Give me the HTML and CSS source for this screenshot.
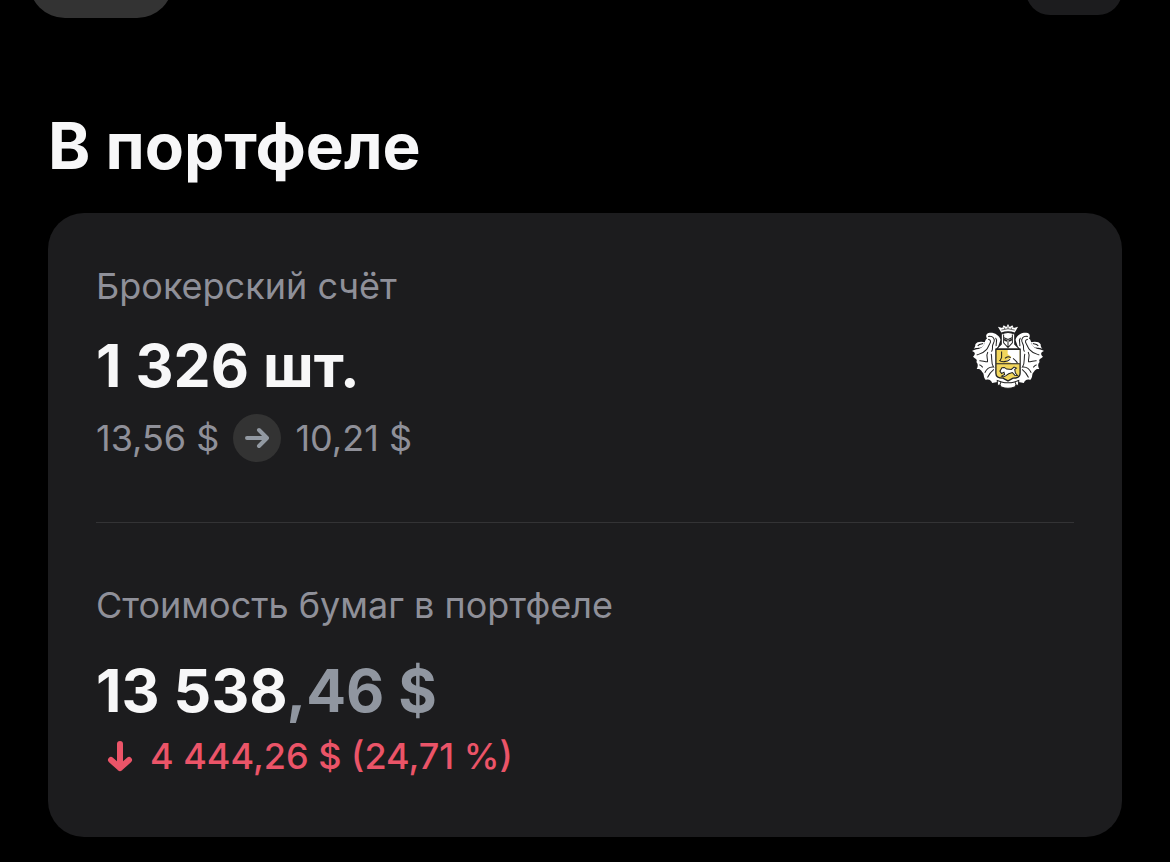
FILE: index.html
```html
<!DOCTYPE html>
<html lang="ru">
<head>
<meta charset="UTF-8">
<meta name="viewport" content="width=device-width, initial-scale=1.0">
<title>В портфеле</title>
<link rel="stylesheet" href="styles.css">
</head>
<body>
<div class="top-bar">
    <div class="pill pill-left"></div>
    <div class="pill pill-right"></div>
</div>

<main class="container">
    <h1>В портфеле</h1>

    <div class="card">
        <section class="account">
            <div>
                <h2 class="label">Брокерский счёт</h2>
                <p class="amount">1 326 шт.</p>
                <div class="prices">
                    <span>13,56 $</span>
                    <span class="arrow">
                        <svg width="24" height="24" viewBox="0 0 24 24">
                            <path d="M2 12H21M14 4L22 12L14 20"/>
                        </svg>
                    </span>
                    <span>10,21 $</span>
                </div>
            </div>
            <svg class="logo" viewBox="36 41 214 196">
                <!-- mantle, right half mirrors the left -->
                <g id="mantle">
                    <path class="white" d="M121 88C117 74 103 66 89 67C77 68 76 78 81 84C73 88 76 98 70 104C67 112 60 113 55 115C47 116 42 117 36 121C45 124 48 130 39 138C47 145 53 145 49 154C54 159 55 166 50 175C62 172 64 181 70 188C72 195 70 201 77 207C86 203 93 208 96 216L112 213L144 216V113L112 113Z"/>
                    <path class="white" d="M76 95C63 92 50 93 46 101C46 107 44 111 41 115C51 110 61 114 68 108C71 104 72 99 76 95Z"/>
                    <path class="line" d="M53 106C57 100 63 100 69 99M84 78C92 76 100 79 102 87C104 94 98 99 97 106C96 112 99 116 94 123M84 86C92 87 93 94 88 101C84 107 84 112 78 118C70 128 60 129 50 133M106 82C113 89 106 99 108 107M83 124C76 136 84 145 82 153C73 153 66 149 58 150M93 130C97 144 91 155 100 169C91 168 81 171 74 186M101 176C91 184 86 192 82 200M68 170C63 164 61 163 58 162"/>
                </g>
                <use href="#mantle" transform="translate(286 0) scale(-1 1)"/>
                <!-- crown and helmet -->
                <path class="white" d="M123 66L113 49L126 53L130 45L138 50L143 41L148 50L156 45L160 53L173 49L163 66Q143 59 123 66Z"/>
                <path class="line-thin" d="M123 59Q143 51 163 59M131 51L134 56M143 48V55M155 51L152 56"/>
                <path class="helmet" d="M123 71Q143 61 163 71V101L177 115H109L123 101Z"/>
                <path class="line" d="M130 72V97L143 111L156 97V72M131 82L143 87L155 82M143 87V113"/>
                <path class="fill" d="M131 85L140 88V94L132 91ZM155 85L146 88V94L154 91Z"/>
                <!-- shield -->
                <path class="shield" d="M107 116H179V187C179 198 170 202 158 202L143 210L128 202C115 202 107 198 107 187Z"/>
                <path class="white" d="M142 118H177V158H160C151 158 147 152 136 153C140 146 149 145 153 139L142 130Z"/>
                <path class="line" d="M108 159H178M117 149C124 155 140 154 149 146M124 123V140L120 149M134 143C140 137 147 137 151 142M158 143Q168 151 171 157"/>
                <path class="horse" d="M119 181L125 171L132 170L139 175L153 176L161 169L168 172L163 176L165 187L171 194L163 193L156 185L145 189L136 195L129 198L124 196L133 191L131 184L124 188Z"/>
                <!-- ribbon -->
                <path class="ribbon" d="M111 209L124 213C138 217 148 217 162 213L175 209L174 223L167 222L163 228C149 233 137 233 123 228L119 222L112 223ZM122 213L119 222M164 213L167 222"/>
            </svg>
        </section>

        <section class="value">
            <h2 class="label">Стоимость бумаг в портфеле</h2>
            <p class="amount">13 538<span class="cents">,46 $</span></p>
            <p class="change">
                <svg width="48" height="44" viewBox="0 0 48 44">
                    <path d="M24 10V34M15 26L24 34L33 26"/>
                </svg>
                <span>4 444,26 $ (24,71 %)</span>
            </p>
        </section>
    </div>
</main>
</body>
</html>
```
FILE: styles.css
```css
* {
    box-sizing: border-box;
}
body {
    font-family: Inter, "Liberation Sans", sans-serif;
    margin: 0;
    background-color: #000;
    color: #f7f7f8;
}
h1, h2, p {
    margin: 0;
}
.top-bar {
    display: flex;
    justify-content: space-between;
    align-items: flex-end;
    height: 18px;
    padding: 0 48px 0 29px;
    overflow: hidden;
}
.pill-left {
    width: 144px;
    height: 72px;
    border-radius: 36px;
    background-color: #333;
}
.pill-right {
    width: 96px;
    height: 48px;
    margin-bottom: 3px;
    border-radius: 24px;
    background-color: #1c1c1e;
}
.container {
    padding: 88px 48px 24px;
}
h1 {
    font-size: 64px;
    font-weight: 700;
    line-height: 80px;
    margin-bottom: 27px;
}
.card {
    padding: 51px 48px 59px;
    border-radius: 36px;
    background-color: #1c1c1e;
}
.account {
    display: flex;
    justify-content: space-between;
    padding-bottom: 60px;
    border-bottom: 1px solid #333335;
}
.label {
    font-size: 36px;
    font-weight: 400;
    line-height: 44px;
    color: #8f9099;
}
.amount {
    margin-top: 22px;
    font-size: 59px;
    font-weight: 700;
    line-height: 72px;
}
.prices {
    display: flex;
    align-items: center;
    gap: 14px;
    margin-top: 12px;
    font-size: 36px;
    line-height: 48px;
    color: #8f9099;
}
.arrow {
    display: flex;
    align-items: center;
    justify-content: center;
    width: 48px;
    height: 48px;
    border-radius: 50%;
    background-color: #333;
}
.arrow svg {
    fill: none;
    stroke: #9299a2;
    stroke-width: 4;
    stroke-linecap: round;
    stroke-linejoin: round;
}
.logo {
    width: 72px;
    height: 66px;
    margin: 60px 30px 0 0;
}
.logo .white {
    fill: #fff;
}
.logo .line,
.logo .line-thin {
    fill: none;
    stroke: #222;
    stroke-width: 3;
}
.logo .line-thin {
    stroke-width: 2;
}
.logo .fill {
    fill: #222;
}
.logo .shield {
    fill: #f2d65c;
    stroke: #222;
    stroke-width: 4;
}
.logo .helmet,
.logo .horse,
.logo .ribbon {
    fill: #fff;
    stroke: #222;
    stroke-width: 3;
}
.value {
    padding-top: 60px;
}
.value .amount {
    margin-top: 28px;
}
.cents {
    color: #9096a0;
}
.change {
    display: flex;
    gap: 6px;
    margin-top: 7px;
    font-size: 36px;
    font-weight: 500;
    line-height: 44px;
    color: #eb5468;
}
.change svg {
    fill: none;
    stroke: #eb5468;
    stroke-width: 6;
    stroke-linecap: round;
    stroke-linejoin: round;
}
```
